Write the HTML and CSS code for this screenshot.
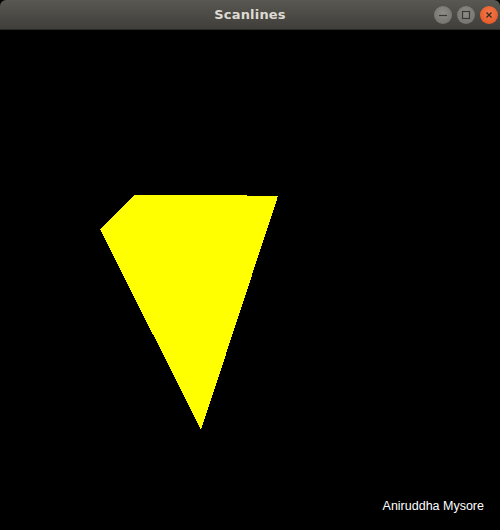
FILE: index.html
```html
<!DOCTYPE html>
<html>
<head>
<meta charset="utf-8">
<link rel="stylesheet" href="styles.css">
</head>
<body>
<div class="window">
  <div class="titlebar">
    <span class="title">Scanlines</span>
    <div class="controls">
      <span class="btn btn-min"><svg width="18" height="18" viewBox="0 0 18 18"><line x1="5" y1="9.5" x2="13" y2="9.5" stroke="#3a3935" stroke-width="1.2"/></svg></span>
      <span class="btn btn-max"><svg width="18" height="18" viewBox="0 0 18 18"><rect x="5.5" y="5.5" width="7" height="7" fill="none" stroke="#3a3935" stroke-width="1.2"/></svg></span>
      <span class="btn btn-close"><svg width="18" height="18" viewBox="0 0 18 18"><path d="M6.5 6.5 L11.5 11.5 M11.5 6.5 L6.5 11.5" stroke="#3a2a20" stroke-width="1.4"/></svg></span>
    </div>
  </div>
  <div class="canvas">
    <svg class="scene" width="500" height="500" viewBox="0 0 500 500">
      <polygon points="134,165 216,165 278,166 201,400 100,199" fill="#ffff00" shape-rendering="crispEdges"/>
    </svg>
    <span class="credit">Aniruddha Mysore</span>
  </div>
</div>
</body>
</html>
```
FILE: styles.css
```css
html, body {
  margin: 0;
  padding: 0;
  background: #000;
}
.window {
  width: 500px;
  height: 530px;
  display: flex;
  flex-direction: column;
}
.titlebar {
  height: 30px;
  flex: 0 0 30px;
  background: linear-gradient(#5a5852, #3f3e3a);
  border-radius: 6px 6px 0 0;
  display: flex;
  align-items: center;
  justify-content: center;
  position: relative;
  box-sizing: border-box;
  border-bottom: 1px solid #2b2a27;
}
.title {
  font-family: "DejaVu Sans", sans-serif;
  font-weight: bold;
  font-size: 13px;
  color: #dedbd3;
  letter-spacing: 0.2px;
}
.controls {
  position: absolute;
  right: 2px;
  top: 6px;
  display: flex;
  gap: 5px;
}
.btn {
  width: 18px;
  height: 18px;
  border-radius: 50%;
  display: block;
  background: radial-gradient(circle at 50% 40%, #8f8d87, #6e6c67);
  border: 0;
}
.btn svg { display: block; }
.btn-close {
  background: radial-gradient(circle at 50% 40%, #f27a4c, #e2511e);
}
.canvas {
  flex: 1;
  position: relative;
  background: #000;
  overflow: hidden;
}
.scene {
  position: absolute;
  left: 0;
  top: 0;
}
.credit {
  position: absolute;
  right: 16px;
  bottom: 17px;
  font-family: "Liberation Sans", sans-serif;
  font-size: 12.5px;
  line-height: 14px;
  color: #fff;
}
```
